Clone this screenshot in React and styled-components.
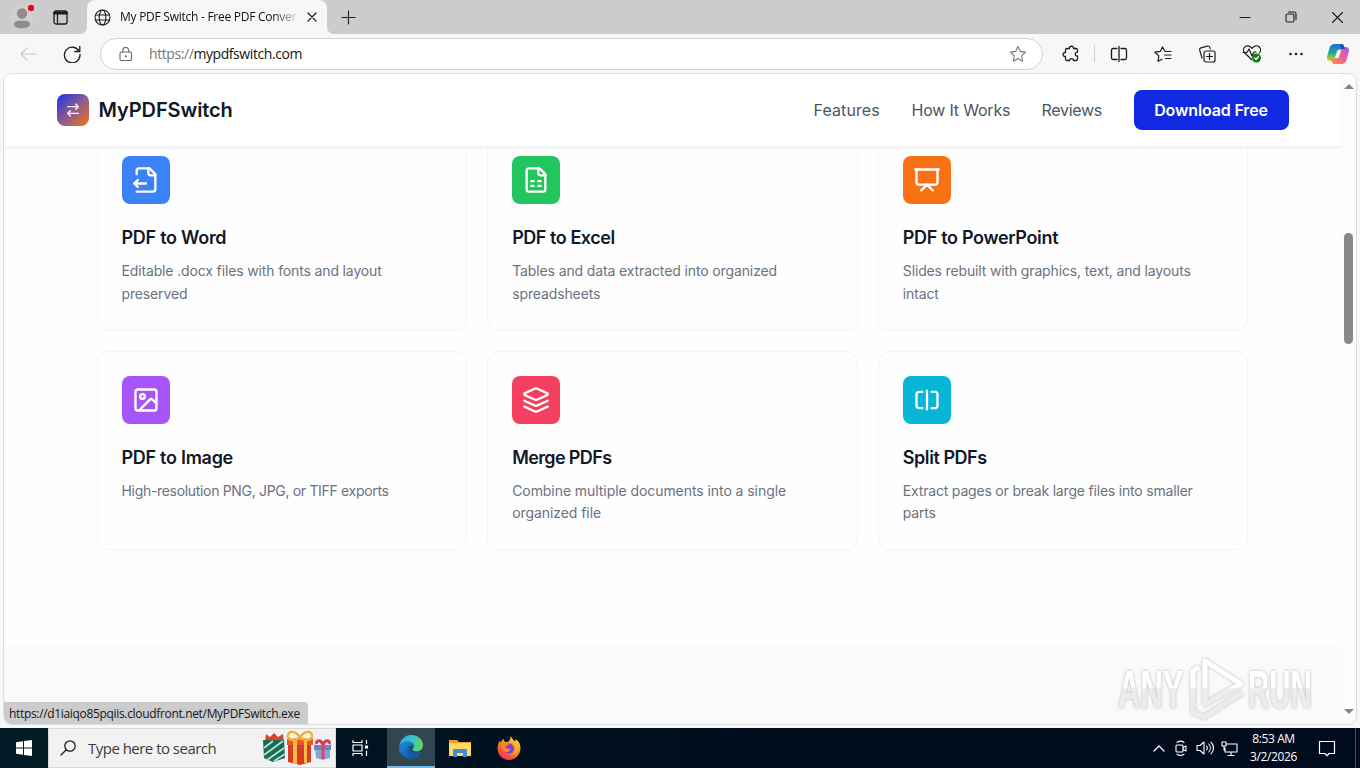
import React from 'react';
import styled, { createGlobalStyle, css } from 'styled-components';

const GlobalStyle = createGlobalStyle`
  * {
    box-sizing: border-box;
  }

  body {
    margin: 0;
    background: #f7f7f7;
    overflow: hidden;
  }

  h3, p {
    margin: 0;
  }

  svg {
    display: block;
    flex: none;
  }
`;

const segoe = css`
  font-family: 'Open Sans', 'Noto Sans', sans-serif;
`;

const Desktop = styled.div`
  width: 1360px;
  height: 768px;
  display: flex;
  flex-direction: column;
  overflow: hidden;
  background: #f7f7f7;
  ${segoe}
`;

/* Browser chrome */

const TabStrip = styled.div`
  height: 34px;
  flex: none;
  display: flex;
  background: #f7f7f7;
`;

const ProfileArea = styled.div`
  width: 87px;
  display: flex;
  align-items: center;
  padding-left: 11px;
  gap: 17px;
  border-bottom-right-radius: 7px;
  background: #cccccc;
`;

const TabWell = styled.div`
  display: flex;
  background: linear-gradient(#cccccc 60%, #f7f7f7 60%);
`;

const Tab = styled.div`
  width: 240px;
  display: flex;
  align-items: center;
  padding: 0 9px 0 7px;
  background: #f7f7f7;
  border-radius: 8px 8px 0 0;
`;

const TabTitle = styled.div`
  flex: 1;
  min-width: 0;
  margin-left: 9px;
  margin-right: 8px;
  font-size: 12px;
  line-height: 18px;
  letter-spacing: -0.26px;
  white-space: nowrap;
  overflow: hidden;
  color: #111;
  mask-image: linear-gradient(to right, #000 86%, transparent 101%);
`;

const StripRest = styled.div`
  flex: 1;
  display: flex;
  align-items: center;
  justify-content: space-between;
  padding: 0 16px 0 14px;
  background: #cccccc;
  border-bottom-left-radius: 7px;
`;

const WindowButtons = styled.div`
  display: flex;
  align-items: center;
  gap: 34px;
`;

const Toolbar = styled.div`
  height: 39px;
  flex: none;
  display: flex;
  align-items: center;
  padding: 0 10px 0 19px;
  background: #f7f7f7;
`;

const NavButtons = styled.div`
  display: flex;
  align-items: center;
  gap: 26px;
  width: 81px;
`;

const AddressBar = styled.div`
  width: 943px;
  height: 32px;
  display: flex;
  align-items: center;
  padding: 0 15px 0 18px;
  border: 1px solid #d2d2d2;
  border-radius: 16px;
  background: #fff;
`;

const Url = styled.div`
  flex: 1;
  margin-left: 16px;
  font-size: 14px;
  line-height: 20px;
  letter-spacing: -0.42px;
  color: #757575;

  span {
    color: #151515;
  }
`;

const ToolIcons = styled.div`
  flex: 1;
  display: flex;
  align-items: center;
  gap: 26px;
  padding-left: 19px;
`;

const ToolDivider = styled.div`
  width: 1px;
  height: 17px;
  margin: 0 -11px 0 -12px;
  background: #cfcfcf;
`;

const CopilotSlot = styled.div`
  margin-left: -4px;
`;

/* Web page */

const PageFrame = styled.div`
  height: 652px;
  flex: none;
  margin: 0 3px;
  display: flex;
  position: relative;
  overflow: hidden;
  border: 1px solid #dedede;
  border-radius: 9px;
  background: #fcfcfc;
`;

const Page = styled.div`
  width: 1337px;
  display: flex;
  flex-direction: column;
  overflow: hidden;
  background: #fefefe;
`;

const SiteHeader = styled.header`
  height: 74px;
  flex: none;
  background: #fff;
  border-bottom: 2px solid #f3f4f6;
  box-shadow: 0 1px 2px rgba(0, 0, 0, 0.03);
  z-index: 1;
`;

const HeaderInner = styled.div`
  width: 1232px;
  height: 72px;
  margin: 0 auto;
  display: flex;
  align-items: center;
  justify-content: space-between;
`;

const Brand = styled.div`
  display: flex;
  align-items: center;
  gap: 10px;
  font-family: Inter, sans-serif;
  font-size: 20px;
  font-weight: 600;
  letter-spacing: -0.1px;
  color: #111827;
`;

const BrandMark = styled.div`
  width: 32px;
  height: 32px;
  display: grid;
  place-items: center;
  border-radius: 8px;
  background: linear-gradient(135deg, #1d34e4 0%, #8b5a92 50%, #f97316 100%);
`;

const SiteNav = styled.nav`
  display: flex;
  align-items: center;
  gap: 32px;
`;

const NavLink = styled.a`
  width: ${props => props.$width}px;
  font-family: Inter, sans-serif;
  font-size: 16px;
  line-height: 24px;
  letter-spacing: ${props => props.$spacing};
  white-space: nowrap;
  color: #4b5563;
`;

const DownloadButton = styled.button`
  width: 155px;
  height: 40px;
  padding: 0;
  border: 0;
  border-radius: 8px;
  background: #1229e2;
  color: #fff;
  font-family: Inter, sans-serif;
  font-size: 16px;
  font-weight: 600;
  letter-spacing: -0.15px;
  white-space: nowrap;
`;

const Features = styled.section`
  height: 498px;
  flex: none;
  padding: 0 92.5px;
  overflow: hidden;
`;

const CardGrid = styled.div`
  margin-top: -17px;
  display: grid;
  grid-template-columns: repeat(3, 1fr);
  gap: 20px;
`;

const Card = styled.article`
  height: 199.5px;
  padding: 24px;
  border: 1px solid #f3f4f6;
  border-radius: 12px;
  background: #fefefe;
`;

const CardIcon = styled.div`
  width: 48px;
  height: 48px;
  display: grid;
  place-items: center;
  border-radius: 8px;
  background: ${props => props.$color};
`;

const CardTitle = styled.h3`
  margin: 20px 0 8px;
  font-family: Inter, sans-serif;
  font-size: 18px;
  line-height: 28px;
  font-weight: 600;
  letter-spacing: ${props => props.$spacing};
  white-space: nowrap;
  color: #111827;
`;

const CardLine = styled.p`
  font-family: Inter, sans-serif;
  font-size: 14px;
  line-height: 22.75px;
  letter-spacing: ${props => props.$spacing};
  white-space: nowrap;
  color: #6b7280;
`;

const NextSection = styled.section`
  flex: 1;
  background: #f8fafc;
`;

const Scrollbar = styled.div`
  width: 15px;
  display: flex;
  flex-direction: column;
  align-items: center;
  padding: 10px 0 10px;
`;

const ScrollArrow = styled.div`
  width: 0;
  height: 0;
  border-left: 5px solid transparent;
  border-right: 5px solid transparent;
  ${props => props.$down
    ? 'border-top: 5px solid #858585;'
    : 'border-bottom: 5px solid #858585;'}
`;

const ScrollTrack = styled.div`
  flex: 1;
  padding-top: 144px;
`;

const ScrollThumb = styled.div`
  width: 9px;
  height: 111px;
  border-radius: 5px;
  background: #888;
`;

const StatusBubble = styled.div`
  position: absolute;
  left: 0;
  bottom: 0;
  width: 304px;
  height: 22px;
  padding-left: 5px;
  border-top-right-radius: 4px;
  background: #cccccc;
  color: #161616;
  font-size: 12px;
  line-height: 23px;
  letter-spacing: -0.33px;
  white-space: nowrap;
`;

const Watermark = styled.svg`
  position: absolute;
  left: 1108px;
  bottom: 0;
  pointer-events: none;
`;

/* Windows taskbar */

const Taskbar = styled.div`
  height: 40px;
  flex: none;
  margin-top: 3px;
  display: flex;
  align-items: stretch;
  background: linear-gradient(to right, #001c25, #000b1c 60%, #000b1d);
`;

const TaskCell = styled.div`
  width: ${props => props.$width || 48}px;
  display: grid;
  place-items: center;
  ${props => props.$active && `
    background: #31464f;
    border-bottom: 2px solid #76b9ed;
  `}
`;

const SearchBox = styled.div`
  width: 288px;
  display: flex;
  align-items: center;
  padding: 0 4px 0 11px;
  border: 1px solid #d8d8d8;
  background: #f2f2f2;
`;

const SearchLabel = styled.div`
  flex: 1;
  margin-left: 12px;
  font-size: 15px;
  letter-spacing: -0.52px;
  white-space: nowrap;
  color: #3a3a3a;
`;

const Tray = styled.div`
  margin-left: auto;
  display: flex;
  align-items: center;
`;

const TrayIcons = styled.div`
  display: flex;
  align-items: center;
  gap: 7px;
`;

const Clock = styled.div`
  width: 73px;
  padding-right: 2px;
  text-align: center;
  font-size: 12px;
  line-height: 18px;
  letter-spacing: -0.4px;
  white-space: nowrap;
  color: #fff;
`;

const ShowDesktop = styled.div`
  width: 5px;
  height: 40px;
  border-left: 1px solid #4c5561;
`;

const LineIcon = ({ size = 20, box = 20, stroke = '#1b1b1b', weight = 1.1, children }) => (
  <svg
    width={size}
    height={size}
    viewBox={`0 0 ${box} ${box}`}
    fill="none"
    stroke={stroke}
    strokeWidth={weight}
    strokeLinecap="round"
    strokeLinejoin="round"
  >
    {children}
  </svg>
);

const FeatureIcon = ({ children }) => (
  <LineIcon size={28} box={24} stroke="#fff" weight={2}>{children}</LineIcon>
);

const features = [
  {
    title: 'PDF to Word',
    titleSpacing: '-0.27px',
    lines: ['Editable .docx files with fonts and layout', 'preserved'],
    spacing: '-0.14px',
    color: '#3b82f6',
    icon: (
      <>
        <path d="M14 2v4a2 2 0 0 0 2 2h4" />
        <path d="M4 7V4a2 2 0 0 1 2-2h9l5 5v13a2 2 0 0 1-2 2H4" />
        <path d="M2 15h10" />
        <path d="m5 12-3 3 3 3" />
      </>
    ),
  },
  {
    title: 'PDF to Excel',
    titleSpacing: '-0.45px',
    lines: ['Tables and data extracted into organized', 'spreadsheets'],
    spacing: '-0.12px',
    color: '#22c55e',
    icon: (
      <>
        <path d="M15 2H6a2 2 0 0 0-2 2v16a2 2 0 0 0 2 2h12a2 2 0 0 0 2-2V7Z" />
        <path d="M14 2v4a2 2 0 0 0 2 2h4" />
        <path d="M8 13h2M14 13h2M8 17h2M14 17h2" />
      </>
    ),
  },
  {
    title: 'PDF to PowerPoint',
    titleSpacing: '-0.33px',
    lines: ['Slides rebuilt with graphics, text, and layouts', 'intact'],
    spacing: '-0.15px',
    color: '#f97316',
    icon: (
      <>
        <path d="M2 3h20" />
        <path d="M21 3v11a2 2 0 0 1-2 2H5a2 2 0 0 1-2-2V3" />
        <path d="m7 21 5-5 5 5" />
      </>
    ),
  },
  {
    title: 'PDF to Image',
    titleSpacing: '-0.28px',
    lines: ['High-resolution PNG, JPG, or TIFF exports'],
    spacing: '-0.32px',
    color: '#a855f7',
    icon: (
      <>
        <rect width="18" height="18" x="3" y="3" rx="2" />
        <circle cx="9" cy="9" r="2" />
        <path d="m21 15-3.086-3.086a2 2 0 0 0-2.828 0L6 21" />
      </>
    ),
  },
  {
    title: 'Merge PDFs',
    titleSpacing: '-0.62px',
    lines: ['Combine multiple documents into a single', 'organized file'],
    spacing: '-0.065px',
    color: '#f43f5e',
    icon: (
      <>
        <path d="m12.83 2.18a2 2 0 0 0-1.66 0L2.6 6.08a1 1 0 0 0 0 1.83l8.58 3.91a2 2 0 0 0 1.66 0l8.58-3.9a1 1 0 0 0 0-1.83Z" />
        <path d="m22 17.65-9.17 4.16a2 2 0 0 1-1.66 0L2 17.65" />
        <path d="m22 12.65-9.17 4.16a2 2 0 0 1-1.66 0L2 12.65" />
      </>
    ),
  },
  {
    title: 'Split PDFs',
    titleSpacing: '-0.45px',
    lines: ['Extract pages or break large files into smaller', 'parts'],
    spacing: '-0.19px',
    color: '#06b6d4',
    icon: (
      <>
        <path d="M8 19H5c-1 0-2-1-2-2V7c0-1 1-2 2-2h3" />
        <path d="M16 5h3c1 0 2 1 2 2v10c0 1-1 2-2 2h-3" />
        <path d="M12 4v16" />
      </>
    ),
  },
];

const ProfileIcon = () => (
  <svg width="24" height="28" viewBox="0 0 24 28">
    <circle cx="11" cy="14" r="11" fill="#d2d1d0" />
    <circle cx="11" cy="10.5" r="5.2" fill="#8f8c89" />
    <path d="M3 21.3c0-2.3 2-3.6 4-3.6h8c2 0 4 1.3 4 3.6 0 2.7-4 3.9-8 3.9s-8-1.2-8-3.9z" fill="#8f8c89" />
    <circle cx="20" cy="5" r="4.2" fill="#e5d3d3" />
    <circle cx="20" cy="5" r="3.2" fill="#d50f25" />
  </svg>
);

const CopilotIcon = () => (
  <svg width="24" height="24" viewBox="0 0 24 24">
    <defs>
      <linearGradient id="copA" x1="0" y1="0" x2="0" y2="1">
        <stop offset="0" stopColor="#1570d8" />
        <stop offset=".5" stopColor="#20a69a" />
        <stop offset="1" stopColor="#e6cf22" />
      </linearGradient>
      <linearGradient id="copB" x1="1" y1="0" x2="0" y2="1">
        <stop offset="0" stopColor="#a65cf0" />
        <stop offset=".5" stopColor="#f0618e" />
        <stop offset="1" stopColor="#fb8b49" />
      </linearGradient>
    </defs>
    <path d="M8.5 2h7c1.5 0 2.2 1 2.6 2.4L19 7h-3.500c-2 0-2.800 1-3.300 2.700l-1.900 6.100C9.600 18 8.600 19 6.500 19H4.200C1.300 19 .5 16.600 1.200 14l2.400-8.200C4.500 3.200 6 2 8.500 2z" fill="url(#copA)" />
    <path d="M15.500 22h-7c-1.500 0-2.200-1-2.600-2.400L5.200 17h3.300c2 0 2.800-1 3.300-2.700l1.900-6.100C14.400 6 15.400 5 17.500 5h2.300c2.900 0 3.700 2.400 3 5l-2.400 8.200C19.500 20.800 18 22 15.500 22z" fill="url(#copB)" />
    <path d="M11.500 8h3.800l-2.700 8H8.800z" fill="#f7f7f7" />
    <path d="M14 2h1.500c1.500 0 2.200 1 2.600 2.400L19 7h-4z" fill="#1954b8" />
  </svg>
);

const GiftsArt = () => (
  <svg width="68" height="36" viewBox="0 0 68 36">
    {/* green striped bag */}
    <path d="m2 12 1-8 4 3 4-4 4 4 5-3 1 8z" fill="#d9442f" />
    <path d="M0 10h21l1 18-12 4L1 28z" fill="#17695a" />
    <path d="m1 18 9-7M1 25l19-14M4 30l17-12M11 31l11-7" stroke="#b7dfce" strokeWidth="2" fill="none" />
    {/* red box */}
    <path d="M25 13h23v19l-11 3-12-3z" fill="#d83a26" />
    <path d="M24 9h26v6H24z" fill="#ee5236" />
    <path d="M30 9h4v25h-4zM41 9h3v24h-3z" fill="#f4b942" />
    <path d="M37 8c-4-8-13-8-12-1 1 4 7 3 12 1zm0 0c4-8 13-8 12-1-1 4-7 3-12 1z" fill="none" stroke="#f0b032" strokeWidth="2.5" />
    {/* small box */}
    <path d="M52 18h15v10l-7 2-7-2z" fill="#8aa3d5" />
    <path d="M51 15h17v5H51z" fill="#6d83c4" />
    <path d="M58.5 16h3v13h-3z" fill="#e0415c" />
    <path d="M60 15c-2-6-8-5-6-1m6 1c2-6 8-5 6-1" fill="none" stroke="#d93b52" strokeWidth="3" />
  </svg>
);

const EdgeIcon = () => (
  <svg width="24" height="24" viewBox="0 0 24 24">
    <defs>
      <linearGradient id="edgeTop" x1="0" y1=".4" x2="1" y2=".5">
        <stop offset="0" stopColor="#2aa7e8" />
        <stop offset=".55" stopColor="#35c5c8" />
        <stop offset="1" stopColor="#62d957" />
      </linearGradient>
      <linearGradient id="edgeLow" x1="0" y1="0" x2="1" y2="1">
        <stop offset="0" stopColor="#1b8ce0" />
        <stop offset="1" stopColor="#114a8b" />
      </linearGradient>
    </defs>
    <path d="M.3 11C1 4.800 6 0 12.200 0 18.800 0 24 4.600 24 10c0 4-3 6.300-6.300 6.300-3 0-4.200-1.100-4.200-1.900 0-.9 1.400-1.300 1.400-3.300 0-2.600-2.600-4.300-6-4.300C4.500 6.800 1.500 8.600.3 11z" fill="url(#edgeTop)" />
    <path d="M.2 12.500C.8 8.800 4.500 6.800 8.900 6.800c3.400 0 6 1.700 6 4.300-4-1.500-6.600 1-6.600 4.400 0 4 3.700 6.700 7.700 6.700 2.400 0 4-.6 5.300-1.200-2.100 2-5.300 3-8.300 3C6 24-.5 19 .2 12.500z" fill="url(#edgeLow)" />
    <path d="M8.300 15.500c0-2 1-3.800 2.700-4.700-.5 1.200-.3 3 .9 4.500 2 2.500 6 3.200 9.700 1.300.8-.4 1.200.2.800.9-2 3.400-4.800 4.700-6.400 4.700-4 0-7.700-2.700-7.700-6.700z" fill="#135ba5" />
  </svg>
);

const ExplorerIcon = () => (
  <svg width="22" height="18" viewBox="0 0 22 18">
    <path d="M0 1h8l2 2h12v14H0z" fill="#e8a520" />
    <path d="M0 4h22v13H0z" fill="#ffd966" />
    <path d="M4 11.5c0-1 .6-1.5 1.5-1.5h11c.9 0 1.5.5 1.5 1.500V18h-4v-4H8v4H4z" fill="#3d8fd1" />
    <path d="M8 14h6v3H8z" fill="#ffd966" />
  </svg>
);

const FirefoxIcon = () => (
  <svg width="24" height="24" viewBox="0 0 24 24">
    <defs>
      <linearGradient id="fox" x1=".8" y1="0" x2=".2" y2="1">
        <stop offset="0" stopColor="#ffe03a" />
        <stop offset=".45" stopColor="#ff8a1f" />
        <stop offset="1" stopColor="#f0245e" />
      </linearGradient>
    </defs>
    <path d="M14 0c.6 2.700 2.500 3.600 4 5.300.6-.2.600-1.500.300-2.300C21.500 4.500 23.500 8 23.500 12.300 23.500 18.800 18.400 24 12 24S.5 19 .5 12.500C.5 9 1.600 6.500 3 4.500c0 1 .1 1.700.6 2.200.8-1.800 1.900-3.100 3-3.900 0 1.600.6 2.600 1.600 3.300 2.300-.1 3.300-.1 4.300-1.800C13.300 2.900 13.300 1.500 14 0z" fill="url(#fox)" />
    <circle cx="12" cy="12.500" r="5" fill="#7a3fd6" />
    <path d="M5 8c2.500-1.500 6-.7 7.500 1.300-2.300 0-3.800.7-4.300 2.200 2 1.800 4 .7 5 1.500.2 2-2.200 3.500-4.400 3C6.300 15.300 4.600 11.500 5 8z" fill="#ff8226" />
    <path d="M14.500 5.500c3 2 4.500 4.500 4 8-.5 3.200-3 5-5.500 5.200 5 .8 8.500-3 8.300-7.500C21.200 8 18 6 14.500 5.500z" fill="#ffb52a" />
  </svg>
);

const AnyRunMark = () => (
  <Watermark width="220" height="78" viewBox="0 0 220 78">
    <defs>
      <linearGradient id="wm" x1="0" y1="0" x2="0" y2="78" gradientUnits="userSpaceOnUse">
        <stop offset=".53" stopColor="#ffffff" />
        <stop offset=".55" stopColor="#ececec" />
      </linearGradient>
      <linearGradient id="wmText" x1="0" y1="-62" x2="0" y2="16" gradientUnits="userSpaceOnUse">
        <stop offset=".53" stopColor="#ffffff" />
        <stop offset=".55" stopColor="#ececec" />
      </linearGradient>
      <filter id="wmShadow" x="-10%" y="-20%" width="120%" height="140%">
        <feDropShadow dx="0" dy="0" stdDeviation="1.5" floodColor="#70777b" floodOpacity=".55" />
      </filter>
    </defs>
    <g
      fill="url(#wmText)"
      filter="url(#wmShadow)"
      fontFamily="'Liberation Sans', sans-serif"
      fontWeight="700"
      fontSize="54"
    >
      <text transform="translate(6 62) scale(.575 1)">ANY</text>
      <text transform="translate(136 62) scale(.545 1)">RUN</text>
      <g fill="none" stroke="url(#wm)" strokeWidth="5" strokeLinejoin="round">
        <path d="M93 15v43l36-20z" />
        <path d="M87 21l-6 4v41l11 5 38-24" />
      </g>
    </g>
  </Watermark>
);

const BrowserTabs = () => (
  <TabStrip>
    <ProfileArea>
      <ProfileIcon />
      <LineIcon size={17} box={17} weight={1.3}>
        <rect x="2" y="2" width="13" height="13" rx="2" />
        <path d="M2.500 4h12" strokeWidth="3" />
        <path d="M5.500 5v10" />
      </LineIcon>
    </ProfileArea>
    <TabWell>
      <Tab>
        <LineIcon size={17} box={17} weight={1.1}>
          <circle cx="8.5" cy="8.5" r="7.5" />
          <ellipse cx="8.5" cy="8.5" rx="3.3" ry="7.5" />
          <path d="M1.500 6h14M1.500 11h14" />
        </LineIcon>
        <TabTitle>My PDF Switch - Free PDF Conver</TabTitle>
        <LineIcon size={12} box={12} weight={1.2}>
          <path d="m2 2 8 8M10 2l-8 8" />
        </LineIcon>
      </Tab>
    </TabWell>
    <StripRest>
      <LineIcon size={15} box={15} weight={1.1}>
        <path d="M7.500 1v13M1 7.500h13" />
      </LineIcon>
      <WindowButtons>
        <LineIcon size={12} box={12}><path d="M1 6.500h10" /></LineIcon>
        <LineIcon size={12} box={12}>
          <rect x="1" y="3" width="8" height="8" rx="1.5" />
          <path d="M3.500 1H9a2 2 0 0 1 2 2v5.500" />
        </LineIcon>
        <LineIcon size={13} box={13}><path d="m1.500 1.500 10 10M11.500 1.500l-10 10" /></LineIcon>
      </WindowButtons>
    </StripRest>
  </TabStrip>
);

const BrowserToolbar = () => (
  <Toolbar>
    <NavButtons>
      <LineIcon size={18} box={18} stroke="#c8c8c8">
        <path d="M17 9H2M8 3 2 9l6 6" />
      </LineIcon>
      <LineIcon size={18} box={18} weight={1.3}>
        <path d="M16.200 6.500A7.800 7.800 0 1 0 17 9.500M16.800 1.500v5h-5" />
      </LineIcon>
    </NavButtons>
    <AddressBar>
      <LineIcon size={14} box={14} stroke="#666">
        <rect x="1" y="5" width="11.5" height="8.5" rx="1.5" />
        <path d="M3.800 5V3.500a3 3 0 0 1 6 0V5" />
        <circle cx="6.8" cy="9.2" r=".5" fill="#555" />
      </LineIcon>
      <Url>https://<span>mypdfswitch.com</span></Url>
      <LineIcon size={18} box={18} stroke="#777">
        <path d="m9 1.500 2.300 4.900 5.200.7-3.800 3.700.9 5.400L9 13.600l-4.600 2.600.9-5.400L1.500 7.100l5.200-.7z" />
      </LineIcon>
    </AddressBar>
    <ToolIcons>
      <LineIcon size={18} box={18} weight={1.3}>
        <path d="M5 3.500h2.500c-.4-3 4.300-3 4 0H14a1.500 1.500 0 0 1 1.500 1.500v2.200c-3-.6-3 4.300 0 3.800V14a1.500 1.500 0 0 1-1.500 1.500h-2.500c.3-2.600-4.300-2.600-4 0H5A1.500 1.500 0 0 1 3.500 14v-2.500c-3.300.4-3.300-4.400 0-4V5A1.500 1.500 0 0 1 5 3.500z" />
      </LineIcon>
      <ToolDivider />
      <LineIcon size={18} box={18} weight={1.3}>
        <path d="M9 1.500v15M7 3.500H3A1.500 1.500 0 0 0 1.500 5v8A1.500 1.500 0 0 0 3 14.500h4M11 3.500h4A1.500 1.500 0 0 1 16.500 5v8a1.500 1.500 0 0 1-1.500 1.500h-4" />
      </LineIcon>
      <LineIcon size={18} box={18} weight={1.2}>
        <path d="M11 6.300 8.500 2 6.300 6.400 1 7.200l3.800 3.700-.8 5.400 4-2M11.500 6.500H17M10.500 10H17M11.500 13.500H17" />
      </LineIcon>
      <LineIcon size={18} box={18} weight={1.2}>
        <rect x="6" y="6" width="11" height="11" rx="2" />
        <path d="M11.500 8.500v6M8.500 11.500h6M4 13 1.700 5.200a2 2 0 0 1 1.200-2.300l6.500-1.800a2 2 0 0 1 2.400 1.300l.4 1.400" />
      </LineIcon>
      <LineIcon size={20} box={20} weight={1.2}>
        <path d="M9.500 15.500 2.800 9a4 4 0 0 1 5.700-6L10 4.300 11.500 3a4 4 0 0 1 5.800 5.800M1 8.500h4l2-3.500 3 7 2-4h2" />
        <circle cx="14.5" cy="14" r="4.5" fill="#107c10" stroke="none" />
        <path d="m12.500 14 1.500 1.500 2.500-3" stroke="#fff" />
      </LineIcon>
      <LineIcon size={16} box={16} stroke="none">
        <g fill="#222">
          <circle cx="2.5" cy="8" r="1.3" />
          <circle cx="8" cy="8" r="1.3" />
          <circle cx="13.5" cy="8" r="1.3" />
        </g>
      </LineIcon>
      <CopilotSlot><CopilotIcon /></CopilotSlot>
    </ToolIcons>
  </Toolbar>
);

const App = () => (
  <Desktop>
    <GlobalStyle />
    <BrowserTabs />
    <BrowserToolbar />

    <PageFrame>
      <Page>
        <SiteHeader>
          <HeaderInner>
            <Brand>
              <BrandMark>
                <LineIcon size={16} box={24} stroke="#fff" weight={2}>
                  <path d="m16 3 4 4-4 4M20 7H4M8 21l-4-4 4-4M4 17h16" />
                </LineIcon>
              </BrandMark>
              MyPDFSwitch
            </Brand>
            <SiteNav>
              <NavLink $width={66} $spacing="0.1px">Features</NavLink>
              <NavLink $width={98} $spacing="-0.2px">How It Works</NavLink>
              <NavLink $width={60} $spacing="-0.3px">Reviews</NavLink>
              <DownloadButton>Download Free</DownloadButton>
            </SiteNav>
          </HeaderInner>
        </SiteHeader>

        <Features>
          <CardGrid>
            {features.map(item => (
              <Card key={item.title}>
                <CardIcon $color={item.color}>
                  <FeatureIcon>{item.icon}</FeatureIcon>
                </CardIcon>
                <CardTitle $spacing={item.titleSpacing}>{item.title}</CardTitle>
                {item.lines.map(line => (
                  <CardLine key={line} $spacing={item.spacing}>{line}</CardLine>
                ))}
              </Card>
            ))}
          </CardGrid>
        </Features>
        <NextSection />
      </Page>

      <Scrollbar>
        <ScrollArrow />
        <ScrollTrack>
          <ScrollThumb />
        </ScrollTrack>
        <ScrollArrow $down />
      </Scrollbar>

      <StatusBubble>https://d1iaiqo85pqiis.cloudfront.net/MyPDFSwitch.exe</StatusBubble>
      <AnyRunMark />
    </PageFrame>

    <Taskbar>
      <TaskCell>
        <svg width="16" height="16" viewBox="0 0 16 16" fill="#fff">
          <path d="M0 2.200 7 1.200v6.300H0zM8 1.100 16 0v7.500H8zM0 8.500h7v6.300l-7-1zM8 8.500h8V16l-8-1.100z" />
        </svg>
      </TaskCell>
      <SearchBox>
        <LineIcon size={16} box={16} weight={1.3}>
          <circle cx="10" cy="6" r="5.2" />
          <path d="M6.300 9.700 1 15" />
        </LineIcon>
        <SearchLabel>Type here to search</SearchLabel>
        <GiftsArt />
      </SearchBox>
      <TaskCell>
        <LineIcon size={18} box={18} stroke="#fff" weight={1.2}>
          <path d="M2 1.500v2h9v-2M2 16.500v-2h9v2M15.500 1.500v3M15.500 12v4.500" />
          <rect x="2" y="6" width="9" height="6" />
          <path d="M14.500 7h2v2h-2z" fill="#fff" />
        </LineIcon>
      </TaskCell>
      <TaskCell $width={3} />
      <TaskCell $active><EdgeIcon /></TaskCell>
      <TaskCell $width={49}><ExplorerIcon /></TaskCell>
      <TaskCell $width={50}><FirefoxIcon /></TaskCell>
      <Tray>
        <TrayIcons>
          <LineIcon size={14} box={14} stroke="#fff" weight={1.3}>
            <path d="m2 10 5-5 5 5" />
          </LineIcon>
          <LineIcon size={16} box={16} stroke="#fff">
            <rect x="3" y="5" width="7" height="7" rx="1" />
            <path d="m10 7.500 3-1.500v5l-3-1.500M4 2.500c2-1.500 5-1.500 7 0M4 14.300c2 1.300 5 1.300 7 0" />
          </LineIcon>
          <LineIcon size={18} box={18} stroke="#fff">
            <path d="M1 6.500h3L8 3v12l-4-3.500H1zM10.500 7c1 1.200 1 2.800 0 4M12.800 5c2 2.300 2 5.700 0 8M15 3.200c3 3.500 3 8 0 11.600" />
          </LineIcon>
          <LineIcon size={17} box={17} stroke="#fff">
            <path d="M6 4h10v8H4V8M7 15.500h6M10 12v3.500M1 2h4v4H1zM3 6v4" />
          </LineIcon>
        </TrayIcons>
        <Clock>
          <div>8:53 AM</div>
          <div>3/2/2026</div>
        </Clock>
        <TaskCell $width={32}>
          <LineIcon size={18} box={18} stroke="#fff" weight={1.2}>
            <path d="M1.500 2.500h15v12H11l-2 2.300-2-2.300H1.500z" />
          </LineIcon>
        </TaskCell>
        <TaskCell $width={12} />
        <ShowDesktop />
      </Tray>
    </Taskbar>
  </Desktop>
);

export default App;
